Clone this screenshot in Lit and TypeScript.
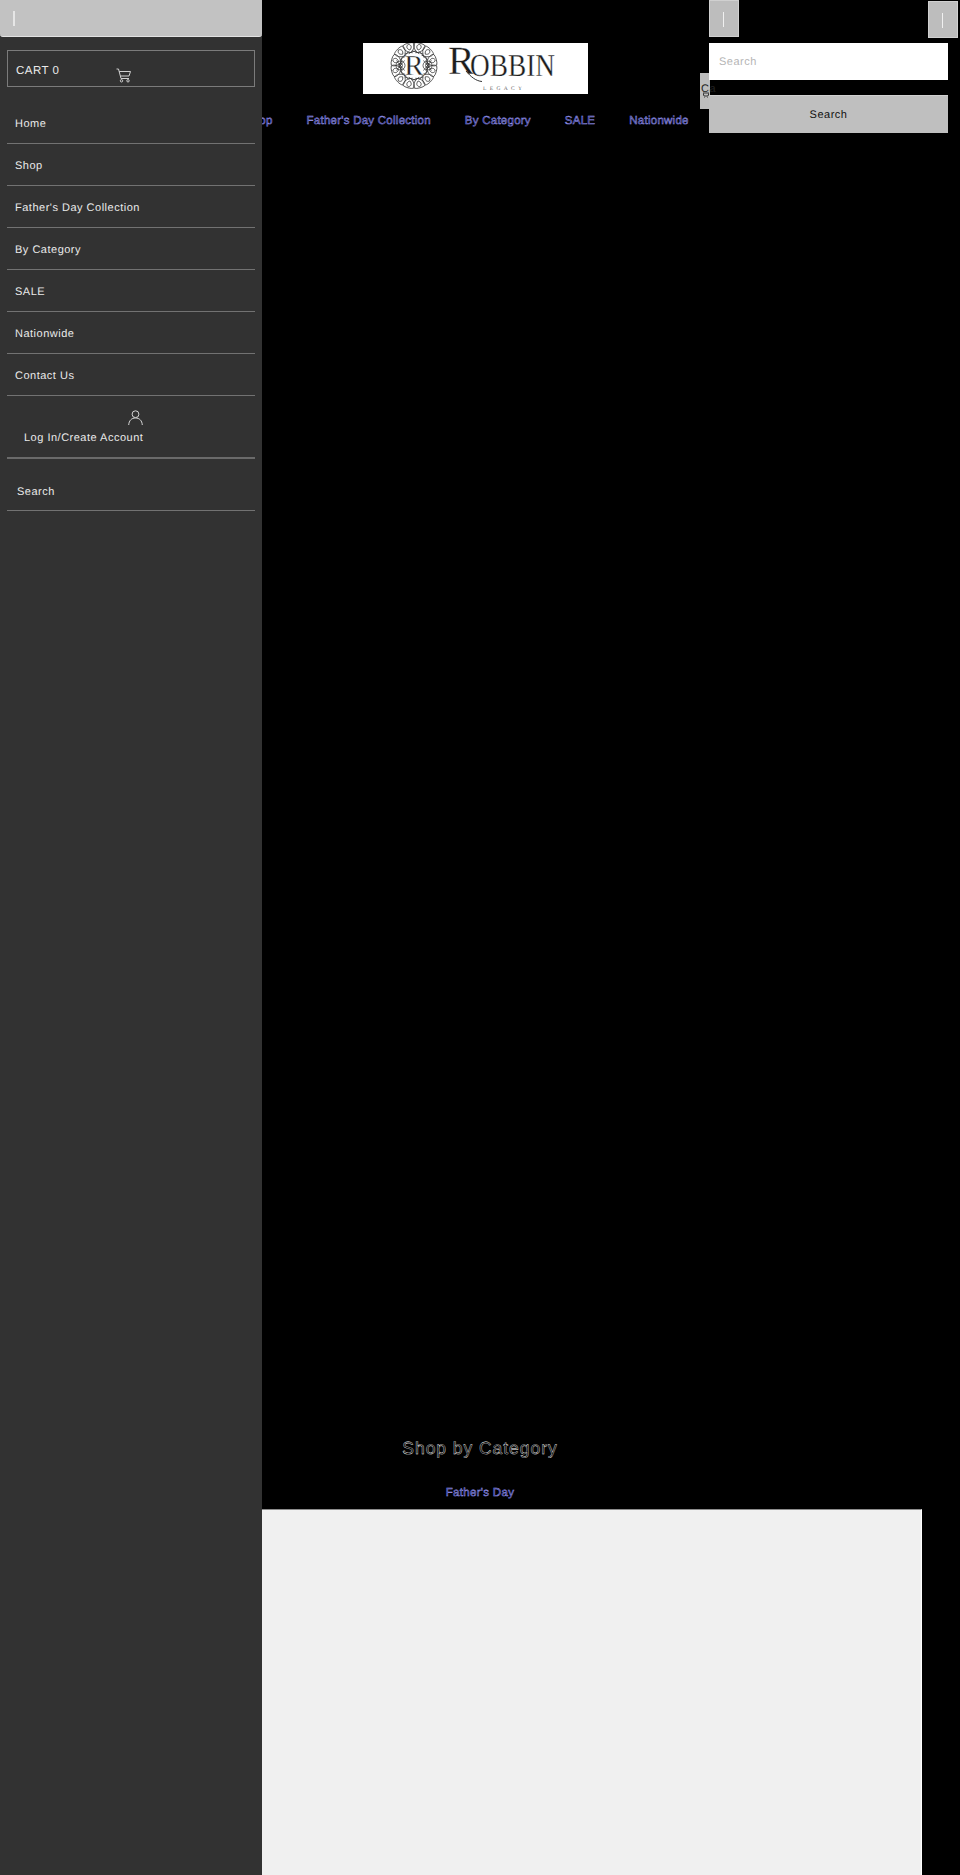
import { LitElement, html, css, svg } from "lit";
import { customElement } from "lit/decorators.js";

const NAV = ["Home", "Shop", "Father's Day Collection", "By Category", "SALE", "Nationwide"];
const MENU = ["Home", "Shop", "Father's Day Collection", "By Category", "SALE", "Nationwide", "Contact Us"];

const ornament = () => {
  const parts = [];
  for (let i = 0; i < 12; i++) {
    const a = i * 30 + 15;
    parts.push(svg`<g transform="rotate(${a})">
      <path d="M-5.5 -22C-6.5 -18.5 -4 -15.5 0 -13.5C4 -15.5 6.5 -18.5 5.5 -22C3.5 -23.5 -3.5 -23.5 -5.5 -22Z"/>
      <path d="M0 -22C-3 -20.5 -2.8 -18 0 -16C2.8 -18 3 -20.5 0 -22Z"/>
      <path d="M-2 -14.5C-5 -13 -7 -12 -8 -10M2 -14.5C5 -13 7 -12 8 -10"/>
    </g>`);
  }
  for (const x of [-13.5, 13.5]) {
    parts.push(svg`<circle cx=${x} cy="0" r="4.5"/><circle cx=${x} cy="0" r="2"/>
      <path d="M${x - 4} -5L${x + 4} 5M${x + 4} -5L${x - 4} 5"/>`);
  }
  return parts;
};

@customElement("app-root")
export class AppRoot extends LitElement {
  static styles = css`
    :host { display: block; position: relative; height: 1875px; overflow: hidden; background: #000;
      font-family: "Liberation Sans", Arial, sans-serif; letter-spacing: 0.5px; font-size: 11px; text-rendering: geometricPrecision; }
    * { box-sizing: border-box; }

    .page { display: flex; flex-direction: column; align-items: center; height: 100%; }
    .logo { margin: 43px 9px 0 0; width: 225px; height: 51px; background: #fff; display: block; flex: none; }
    .logo text { font-family: "Liberation Serif", serif; letter-spacing: 0; }
    .nav { display: flex; gap: 34px; margin-top: 19px; height: 16px; width: 100%; padding-left: 179px; line-height: 16px; white-space: nowrap; font-size: 11.5px; letter-spacing: 0.25px; }
    .outline-link { color: #14144a; -webkit-text-stroke: 0.45px #a0a0ff; }
    .hero { flex: 1; }
    h2 { margin: 0; font-size: 17.5px; font-weight: 400; line-height: 24px; letter-spacing: 0.95px; color: #000; -webkit-text-stroke: 0.35px #fff; }
    .tab { margin-top: 25px; line-height: 16px; font-size: 11.5px; letter-spacing: 0.3px; }
    .panel { margin-top: 8px; width: 884px; height: 366px; flex: none; background: #f0f0f0; border-top: 1px solid #8c8c8c; border-right: 1px solid #fff; }

    .drawer { position: absolute; left: 0; top: 0; width: 262px; height: 100%; background: #323232; color: #eaeaea; display: flex; flex-direction: column; }
    .close { height: 37px; flex: none; background: #c2c2c2; border-radius: 0 0 3px 3px; border-bottom: 1px solid #e2e2e2; padding: 11px 0 0 13px; }
    .caret { display: block; width: 2px; height: 15px; background: #e6e6e6; }
    .cart { margin: 13px 7px 0; height: 37px; flex: none; border: 1px solid #7b7b7b; padding: 12px 8px 0; line-height: 16px; position: relative; font-size: 11.5px; }
    .cart svg { position: absolute; left: 108px; top: 17px; }
    .menu { margin: 15px 7px 0; list-style: none; padding: 0; }
    .menu li { height: 42px; border-bottom: 1px solid #727272; padding: 14px 8px 0; line-height: 16px; }
    .login { margin: 0 7px; height: 63px; flex: none; border-bottom: 2px solid #6a6a6a; display: flex; flex-direction: column; align-items: flex-start; line-height: 16px; padding: 14px 0 0 17px; }
    .login svg { margin: 0 0 5px 104px; }
    .side-search { margin: 0 7px; height: 52px; flex: none; border-bottom: 1px solid #727272; padding: 25px 10px 0; line-height: 16px; }

    .searchbox { position: absolute; left: 709px; top: 0; width: 249px; display: flex; flex-direction: column; }
    .btns { display: flex; justify-content: space-between; height: 38px; }
    .sq { width: 30px; height: 37px; background: #bdbdbd; border: 1px solid #d0d0d0; padding: 11px 0 0 13px; }
    .sq.last { margin-top: 1px; }
    .sq i { display: block; width: 1px; height: 15px; background: #f0f0f0; }
    .input { margin-top: 5px; width: 239px; height: 37px; background: #fff; color: #b5b5b5; line-height: 39px; padding-left: 10px; position: relative; }
    .submit { margin-top: 15px; width: 239px; height: 38px; background: #bfbfbf; border-top: 1px solid #d0d0d0; color: #111; line-height: 39px; text-align: center; position: relative; }
    .stub { position: absolute; left: -9px; top: 73px; width: 10px; height: 36px; background: #bdbdbd; color: #222; line-height: 14px; padding: 9px 0 0 1px; white-space: nowrap; }
    .stub svg { position: absolute; left: 3px; top: 19px; }
  `;

  render() {
    return html`
      <div class="page">
        <svg class="logo" viewBox="0 0 225 51" role="img" aria-label="Robbin Legacy">
          <g transform="translate(51 22.5)" fill="none" stroke="#333" stroke-width="0.75">${ornament()}</g>
          <text x="51" y="32" text-anchor="middle" font-size="29" fill="#222" stroke="#fff" stroke-width="0.35">R</text>
          <text x="85" y="31" font-size="40" fill="#1d1d1d" stroke="#fff" stroke-width="0.3">R</text>
          <text x="107" y="33" font-size="32" fill="#1d1d1d" stroke="#fff" stroke-width="0.3" textLength="85" lengthAdjust="spacingAndGlyphs">OBBIN</text>
          <path d="M103 28C108 34 113 38 119 38.5" fill="none" stroke="#1d1d1d" stroke-width="0.9"/>
          <text x="120" y="47" font-size="5.5" fill="#666" textLength="39">LEGACY</text>
        </svg>
        <nav class="nav">
          ${NAV.map((n) => html`<span class="outline-link">${n}</span>`)}
        </nav>
        <div class="hero"></div>
        <h2>Shop by Category</h2>
        <div class="tab outline-link">Father's Day</div>
        <div class="panel"></div>
      </div>

      <aside class="drawer">
        <div class="close"><span class="caret"></span></div>
        <div class="cart">CART 0
          <svg width="15" height="15" viewBox="0 0 15 15" fill="none" stroke="#cfcfcf" stroke-width="1">
            <path d="M0.5 1H2.5L5 10.5H13M3.2 3.5H14.5L13 8H4.3"/><circle cx="5.5" cy="12.8" r="1.2"/><circle cx="12" cy="12.8" r="1.2"/>
          </svg>
        </div>
        <ul class="menu">${MENU.map((m) => html`<li>${m}</li>`)}</ul>
        <div class="login">
          <svg width="15" height="15" viewBox="0 0 15 15" fill="none" stroke="#d5d5d5" stroke-width="1">
            <circle cx="7.5" cy="4.2" r="3.4"/><path d="M0.7 15C1 10.5 3.6 8 7.5 8S14 10.5 14.3 15"/>
          </svg>
          <span>Log In/Create Account</span>
        </div>
        <div class="side-search">Search</div>
      </aside>

      <div class="searchbox">
        <div class="stub">Ca
          <svg width="6" height="6" viewBox="0 0 6 6" fill="none" stroke="#333" stroke-width="1"><path d="M0 1H6L5 4H1ZM1 6H2M4 6H5"/></svg>
        </div>
        <div class="btns">
          <div class="sq"><i></i></div>
          <div class="sq last"><i></i></div>
        </div>
        <div class="input">Search</div>
        <div class="submit">Search</div>
      </div>
    `;
  }
}
